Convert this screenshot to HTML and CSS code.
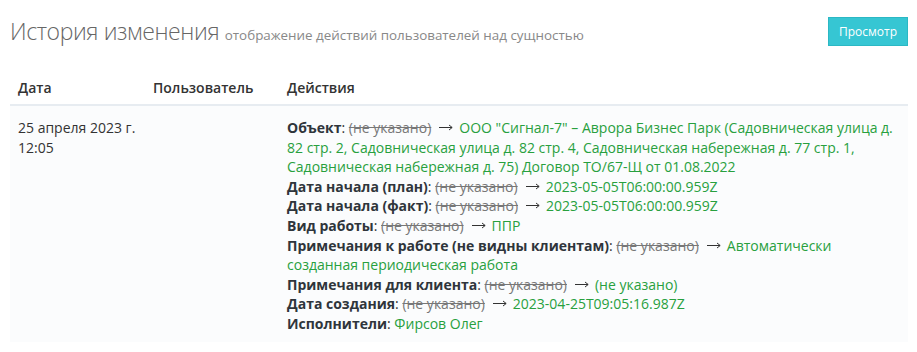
FILE: index.html
```html
<!DOCTYPE html>
<html lang="ru">
<head>
<meta charset="utf-8">
<title>История изменения</title>
<link rel="stylesheet" href="styles.css">
</head>
<body>
<div class="page">
  <div class="head">
    <h1 class="title">История изменения <small class="subtitle">отображение действий пользователей над сущностью</small></h1>
    <button class="btn">Просмотр</button>
  </div>
  <table class="tbl">
    <thead>
      <tr>
        <th class="c-date">Дата</th>
        <th class="c-user">Пользователь</th>
        <th>Действия</th>
      </tr>
    </thead>
    <tbody>
      <tr>
        <td class="c-date">25 апреля 2023 г. 12:05</td>
        <td class="c-user"></td>
        <td>
          <div><b>Объект</b>: <s>(не указано)</s><svg class="arr" viewBox="0 0 14 7"><path d="M0 3.5H13M10 1L13.2 3.5L10 6"/></svg><span class="new">ООО "Сигнал-7" – Аврора Бизнес Парк (Садовническая улица д. 82 стр. 2, Садовническая улица д. 82 стр. 4, Садовническая набережная д. 77 стр. 1, Садовническая набережная д. 75) Договор ТО/67-Щ от 01.08.2022</span></div>
          <div><b>Дата начала (план)</b>: <s>(не указано)</s><svg class="arr" viewBox="0 0 14 7"><path d="M0 3.5H13M10 1L13.2 3.5L10 6"/></svg><span class="new">2023-05-05T06:00:00.959Z</span></div>
          <div><b>Дата начала (факт)</b>: <s>(не указано)</s><svg class="arr" viewBox="0 0 14 7"><path d="M0 3.5H13M10 1L13.2 3.5L10 6"/></svg><span class="new">2023-05-05T06:00:00.959Z</span></div>
          <div><b>Вид работы</b>: <s>(не указано)</s><svg class="arr" viewBox="0 0 14 7"><path d="M0 3.5H13M10 1L13.2 3.5L10 6"/></svg><span class="new">ППР</span></div>
          <div><b>Примечания к работе (не видны клиентам)</b>: <s>(не указано)</s><svg class="arr" viewBox="0 0 14 7"><path d="M0 3.5H13M10 1L13.2 3.5L10 6"/></svg><span class="new">Автоматически созданная периодическая работа</span></div>
          <div><b>Примечания для клиента</b>: <s>(не указано)</s><svg class="arr" viewBox="0 0 14 7"><path d="M0 3.5H13M10 1L13.2 3.5L10 6"/></svg><span class="new">(не указано)</span></div>
          <div><b>Дата создания</b>: <s>(не указано)</s><svg class="arr" viewBox="0 0 14 7"><path d="M0 3.5H13M10 1L13.2 3.5L10 6"/></svg><span class="new">2023-04-25T09:05:16.987Z</span></div>
          <div><b>Исполнители</b>: <span class="new">Фирсов Олег</span></div>
        </td>
      </tr>
    </tbody>
  </table>
</div>
</body>
</html>
```
FILE: styles.css
```css
html, body {
  margin: 0;
  padding: 0;
  background: #fff;
}
body {
  font-family: "Open Sans", "Noto Sans", sans-serif;
  font-size: 14px;
  line-height: 19.6px;
  color: #333;
}
.page {
  padding: 16px 9px 0 10px;
}
.head {
  display: flex;
  justify-content: space-between;
  align-items: flex-start;
  height: 54px;
}
.title {
  margin: 0;
  padding-top: 0;
  font-size: 23px;
  line-height: 30px;
  font-weight: 300;
  color: #666;
  letter-spacing: -0.4px;
}
.subtitle {
  font-size: 13.4px;
  font-weight: 400;
  color: #888;
  letter-spacing: 0;
}
.btn {
  font-family: inherit;
  font-size: 12px;
  line-height: 17px;
  color: #fff;
  background: #36c6d3;
  border: 1px solid #2bb8c4;
  padding: 5px 10px 5px;
  width: 80px;
  height: 29px;
  margin: 1px 0 0;
  cursor: pointer;
}
.tbl {
  width: 898px;
  border-collapse: collapse;
  table-layout: fixed;
}
.tbl th {
  text-align: left;
  font-weight: 600;
  line-height: 20px;
  padding: 8px 8px 6px;
  border-bottom: 2px solid #e7ecf1;
  vertical-align: top;
}
.tbl td {
  padding: 12px 8px 8px;
  vertical-align: top;
  background: #fbfcfd;
}
.c-date { width: 119px; }
.c-user { width: 118px; }
b {
  font-weight: 700;
  color: #2f353b;
}
s {
  color: #777;
}
.arr {
  display: inline-block;
  width: 14px;
  height: 7px;
  margin: 0 6px 0 8px;
  vertical-align: 2px;
  fill: none;
  stroke: #333;
  stroke-width: 1;
}
.new {
  color: #28a03e;
}
```
